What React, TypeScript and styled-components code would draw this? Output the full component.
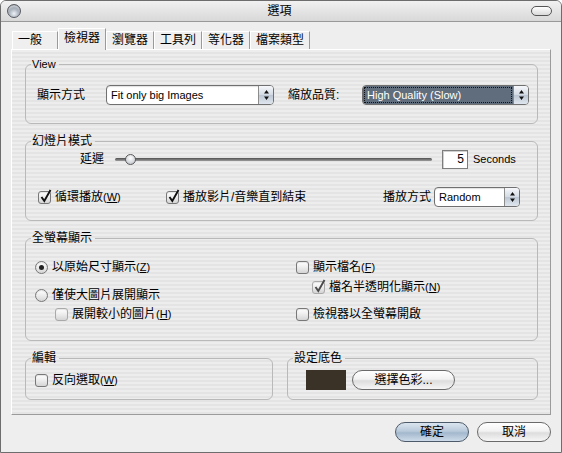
import styled, { createGlobalStyle, css } from "styled-components";

const GlobalStyle = createGlobalStyle`
  html, body {
    margin: 0;
    padding: 0;
    background: #ffffff;
  }
  body {
    font-family: "Liberation Sans", "Noto Sans CJK TC", sans-serif;
    font-size: 12px;
    line-height: 16px;
    color: #000;
  }
  *, *::before, *::after {
    box-sizing: border-box;
  }
`;

// pinstripe backdrop used by the tab pane
const stripes = css`
  background: repeating-linear-gradient(
    180deg,
    #ededed 0 2px,
    #e4e4e4 2px 4px
  );
`;

const Window = styled.div`
  width: 562px;
  height: 453px;
  display: flex;
  flex-direction: column;
  border: 1px solid #6d6d6d;
  border-radius: 6px 6px 0 0;
  background: #eeeeee;
  overflow: hidden;
`;

const TitleBar = styled.div`
  flex: none;
  height: 21px;
  display: grid;
  grid-template-columns: 1fr auto 1fr;
  align-items: center;
  padding: 0 9px 0 6px;
  background: linear-gradient(#f1f1f1, #d8d8d8);
  border-bottom: 1px solid #999999;
`;

const CloseDot = styled.span`
  justify-self: start;
  width: 14px;
  height: 14px;
  border-radius: 50%;
  border: 1px solid #575b62;
  background: radial-gradient(
    circle at 50% 72%,
    #eef2f7 0,
    #aab2bd 45%,
    #646b75 100%
  );
  box-shadow: inset 0 2px 2px rgba(255, 255, 255, 0.55);
`;

const Title = styled.div`
  font-size: 12px;
`;

const ZoomPill = styled.span`
  justify-self: end;
  width: 21px;
  height: 10px;
  border-radius: 5px;
  border: 1px solid #555555;
  background: linear-gradient(#ffffff, #d9d9d9);
`;

const Body = styled.div`
  flex: 1;
  display: flex;
  flex-direction: column;
  padding: 6px 10px 0 10px;
`;

const TabRow = styled.div`
  display: flex;
  align-items: flex-end;
  height: 21px;
  padding-left: 1px;
  position: relative;
  z-index: 1;
`;

const Tab = styled.div<{ $active?: boolean }>`
  height: 18px;
  min-width: 46px;
  padding: 0 5px;
  border: 1px solid #9a9a9a;
  border-top-color: #ffffff;
  border-left-color: #ffffff;
  border-bottom: none;
  background: #efefef;
  line-height: 17px;
  white-space: nowrap;

  ${({ $active }) =>
    $active &&
    css`
      height: 22px;
      margin-bottom: -1px;
      min-width: 48px;
      background: #ececec;
      line-height: 19px;
    `}
`;

const Panel = styled.div`
  display: flex;
  flex-direction: column;
  gap: 10px;
  padding: 7px 12px 14px 13px;
  border: 1px solid #9b9b9b;
  border-top-color: #ffffff;
  border-left-color: #ffffff;
  ${stripes}
`;

const Group = styled.fieldset`
  margin: 0;
  padding: 0;
  min-width: 0;
  border: 1px solid #b9b9b9;
  border-radius: 6px;
`;

const Legend = styled.legend<{ $latin?: boolean }>`
  margin-left: 5px;
  padding: 0 3px 0 1px;
  font-size: ${({ $latin }) => ($latin ? "11px" : "12px")};
  line-height: 14px;
`;

const GroupBody = styled.div<{ $pad: string }>`
  padding: ${({ $pad }) => $pad};
`;

const Row = styled.div<{ $gap?: number; $mt?: number; $pr?: number; $pl?: number }>`
  display: flex;
  align-items: center;
  height: 20px;
  gap: ${({ $gap }) => $gap ?? 0}px;
  margin-top: ${({ $mt }) => $mt ?? 0}px;
  padding-right: ${({ $pr }) => $pr ?? 0}px;
  padding-left: ${({ $pl }) => $pl ?? 0}px;
`;

const FieldLabel = styled.span<{ $width?: number; $right?: boolean }>`
  flex: none;
  width: ${({ $width }) => ($width ? `${$width}px` : "auto")};
  text-align: ${({ $right }) => ($right ? "right" : "left")};
  white-space: nowrap;
`;

const Select = styled.div<{ $width: number }>`
  flex: none;
  width: ${({ $width }) => $width}px;
  height: 20px;
  display: flex;
  border: 1px solid #707070;
  border-radius: 4px;
  background: #ffffff;
  overflow: hidden;
  box-shadow: inset 0 1px 1px rgba(0, 0, 0, 0.12);
`;

const SelectValue = styled.span<{ $focused?: boolean }>`
  flex: 1;
  padding: 0 4px;
  font-size: 11px;
  line-height: 18px;
  white-space: nowrap;

  ${({ $focused }) =>
    $focused &&
    css`
      background: #5f6d7c;
      color: #ffffff;
      outline: 1px dotted #111111;
      outline-offset: -2px;
    `}
`;

const SelectArrows = styled.span`
  flex: none;
  width: 15px;
  display: flex;
  align-items: center;
  justify-content: center;
  border-left: 1px solid #8c8c8c;
  background: linear-gradient(#f6f8fb, #d2dae3 50%, #bcc7d3 51%, #dfe6ee);
`;

const Item = styled.label<{ $indent?: number; $mt?: number; $width?: number; $grow?: boolean }>`
  display: flex;
  align-items: center;
  gap: 4px;
  height: 16px;
  white-space: nowrap;
  margin-left: ${({ $indent }) => $indent ?? 0}px;
  margin-top: ${({ $mt }) => $mt ?? 0}px;
  width: ${({ $width }) => ($width ? `${$width}px` : "auto")};
  flex: ${({ $grow }) => ($grow ? "1" : "none")};
`;

const Box = styled.span<{ $round?: boolean; $dim?: boolean }>`
  position: relative;
  flex: none;
  width: 13px;
  height: 13px;
  display: flex;
  align-items: center;
  justify-content: center;
  border: 1px solid ${({ $dim }) => ($dim ? "#a9a9a9" : "#787878")};
  border-radius: ${({ $round }) => ($round ? "50%" : "3px")};
  background: linear-gradient(#ffffff, #ececec 50%, #d5d5d5);
  box-shadow: inset 0 1px 1px rgba(0, 0, 0, 0.1);
`;

const Tick = styled.svg`
  position: absolute;
  left: 1px;
  top: -3px;
  overflow: visible;
`;

const RadioDot = styled.span`
  width: 5px;
  height: 5px;
  border-radius: 50%;
  background: #222222;
`;

const Key = styled.span`
  font-family: "Liberation Sans", sans-serif;
  font-size: 11px;
`;

const Slider = styled.div`
  position: relative;
  flex: none;
  width: 317px;
  height: 3px;
  border-radius: 2px;
  background: linear-gradient(#4f4f4f, #9c9c9c);
`;

const Thumb = styled.span`
  position: absolute;
  top: -4px;
  left: 10px;
  width: 11px;
  height: 11px;
  border-radius: 50%;
  border: 1px solid #5a5a5a;
  background: radial-gradient(circle at 50% 35%, #ffffff, #ccd0d5 70%, #9aa0a7);
`;

const NumberBox = styled.div`
  flex: none;
  width: 26px;
  height: 19px;
  padding-right: 3px;
  border: 1px solid #7d7d7d;
  background: #ffffff;
  text-align: right;
  line-height: 17px;
  box-shadow: inset 1px 1px 0 #d0d0d0;
`;

const Unit = styled.span`
  font-size: 11px;
`;

const Columns = styled.div`
  display: grid;
  grid-template-columns: 261px 1fr;
`;

const Column = styled.div`
  display: flex;
  flex-direction: column;
`;

const BottomRow = styled.div`
  display: grid;
  grid-template-columns: 248px 1fr;
  gap: 14px;
`;

const Swatch = styled.span<{ $color: string }>`
  flex: none;
  width: 40px;
  height: 20px;
  background: ${({ $color }) => $color};
`;

const PillButton = styled.button<{ $width: number; $default?: boolean }>`
  flex: none;
  width: ${({ $width }) => $width}px;
  height: 20px;
  padding: 0;
  border: 1px solid #6a6a6a;
  border-radius: 10px;
  background: linear-gradient(#ffffff 0%, #f2f2f2 45%, #dddddd 55%, #f6f6f6 100%);
  font: inherit;
  font-size: 12px;
  line-height: 16px;
  color: #000000;

  ${({ $default }) =>
    $default &&
    css`
      border-color: #4d5a69;
      background: linear-gradient(
        #dbe5ef 0%,
        #b9cadb 45%,
        #a3b8cd 55%,
        #cddbe9 100%
      );
    `}
`;

const Footer = styled.div`
  display: flex;
  justify-content: flex-end;
  gap: 8px;
  padding: 7px 0 0 0;
`;

function Arrows() {
  return (
    <svg width="5" height="10" viewBox="0 0 5 10">
      <path d="M2.5 0 L5 3.5 H0 Z M2.5 10 L5 6.5 H0 Z" fill="#111" />
    </svg>
  );
}

type PopupProps = { width: number; value: string; focused?: boolean };

function Popup({ width, value, focused }: PopupProps) {
  return (
    <Select $width={width}>
      <SelectValue $focused={focused}>{value}</SelectValue>
      <SelectArrows>
        <Arrows />
      </SelectArrows>
    </Select>
  );
}

function CheckBox({ checked, dim }: { checked?: boolean; dim?: boolean }) {
  return (
    <Box $dim={dim}>
      {checked && (
        <Tick width="12" height="14" viewBox="0 0 12 14">
          <path
            d="M1.5 8 L4.3 12 L10.5 1"
            fill="none"
            stroke={dim ? "#4a4a4a" : "#111111"}
            strokeWidth="1.9"
          />
        </Tick>
      )}
    </Box>
  );
}

function Radio({ on }: { on?: boolean }) {
  return <Box $round>{on && <RadioDot />}</Box>;
}

function App() {
  return (
    <>
      <GlobalStyle />
      <Window>
        <TitleBar>
          <CloseDot />
          <Title>選項</Title>
          <ZoomPill />
        </TitleBar>
        <Body>
          <TabRow>
            <Tab>一般</Tab>
            <Tab $active>檢視器</Tab>
            <Tab>瀏覽器</Tab>
            <Tab>工具列</Tab>
            <Tab>等化器</Tab>
            <Tab>檔案類型</Tab>
          </TabRow>
          <Panel>
            <Group>
              <Legend $latin>View</Legend>
              <GroupBody $pad="14px 8px 18px 11px">
                <Row>
                  <FieldLabel $width={69}>顯示方式</FieldLabel>
                  <Popup width={168} value="Fit only big Images" />
                  <FieldLabel $width={74} style={{ marginLeft: 14 }}>
                    縮放品質:
                  </FieldLabel>
                  <Popup width={167} value="High Quality (Slow)" focused />
                </Row>
              </GroupBody>
            </Group>

            <Group>
              <Legend>幻燈片模式</Legend>
              <GroupBody $pad="1px 0 13px 0">
                <Row>
                  <FieldLabel $width={78} $right>
                    延遲
                  </FieldLabel>
                  <Slider style={{ marginLeft: 11 }}>
                    <Thumb />
                  </Slider>
                  <NumberBox style={{ marginLeft: 10 }}>5</NumberBox>
                  <Unit style={{ marginLeft: 5 }}>Seconds</Unit>
                </Row>
                <Row $mt={18} $pl={12} $pr={17}>
                  <Item $width={128}>
                    <CheckBox checked />
                    <span>
                      循環播放<Key>(<u>W</u>)</Key>
                    </span>
                  </Item>
                  <Item $grow>
                    <CheckBox checked />
                    <span>播放影片/音樂直到結束</span>
                  </Item>
                  <FieldLabel>播放方式</FieldLabel>
                  <span style={{ width: 3 }} />
                  <Popup width={86} value="Random" />
                </Row>
              </GroupBody>
            </Group>

            <Group>
              <Legend>全螢幕顯示</Legend>
              <GroupBody $pad="14px 8px 18px 9px">
                <Columns>
                  <Column>
                    <Item>
                      <Radio on />
                      <span>
                        以原始尺寸顯示<Key>(<u>Z</u>)</Key>
                      </span>
                    </Item>
                    <Item $mt={12}>
                      <Radio />
                      <span>僅使大圖片展開顯示</span>
                    </Item>
                    <Item $mt={3} $indent={20}>
                      <CheckBox dim />
                      <span>
                        展開較小的圖片<Key>(<u>H</u>)</Key>
                      </span>
                    </Item>
                  </Column>
                  <Column>
                    <Item>
                      <CheckBox />
                      <span>
                        顯示檔名<Key>(<u>F</u>)</Key>
                      </span>
                    </Item>
                    <Item $mt={4} $indent={16}>
                      <CheckBox checked dim />
                      <span>
                        檔名半透明化顯示<Key>(<u>N</u>)</Key>
                      </span>
                    </Item>
                    <Item $mt={11}>
                      <CheckBox />
                      <span>檢視器以全螢幕開啟</span>
                    </Item>
                  </Column>
                </Columns>
              </GroupBody>
            </Group>

            <BottomRow>
              <Group>
                <Legend>編輯</Legend>
                <GroupBody $pad="5px 8px 9px 9px">
                  <Row>
                    <Item>
                      <CheckBox />
                      <span>
                        反向選取<Key>(<u>W</u>)</Key>
                      </span>
                    </Item>
                  </Row>
                </GroupBody>
              </Group>
              <Group>
                <Legend>設定底色</Legend>
                <GroupBody $pad="5px 8px 9px 18px">
                  <Row $gap={6}>
                    <Swatch $color="#3a3127" />
                    <PillButton $width={103}>選擇色彩...</PillButton>
                  </Row>
                </GroupBody>
              </Group>
            </BottomRow>
          </Panel>
          <Footer>
            <PillButton $width={74} $default>
              確定
            </PillButton>
            <PillButton $width={74}>取消</PillButton>
          </Footer>
        </Body>
      </Window>
    </>
  );
}

export default App;
